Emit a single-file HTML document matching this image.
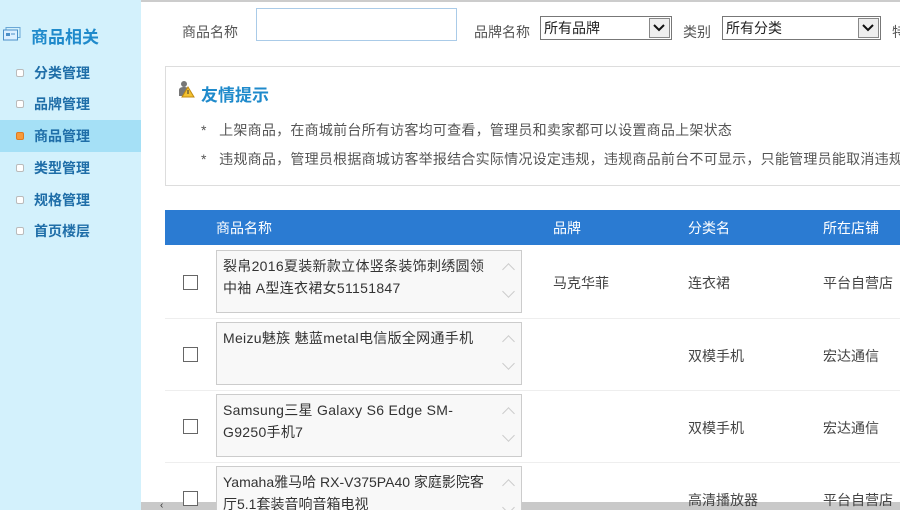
<!DOCTYPE html>
<html><head><meta charset="utf-8"><style>
*{margin:0;padding:0;box-sizing:border-box}
html,body{width:900px;height:510px;overflow:hidden}
body{position:relative;background:#fff;font-family:"Liberation Sans","Noto Sans CJK SC",sans-serif;font-size:14px;color:#555}
.abs{position:absolute;white-space:nowrap}
#side{position:absolute;left:0;top:0;width:141px;height:510px;background:#d3f1fc}
.it{position:absolute;left:0;width:141px;height:32px;line-height:32px;padding-left:34px;font-weight:bold;color:#1f6ea8;font-size:14px}
.it i{position:absolute;left:16px;top:12px;width:8px;height:8px;border-radius:2px;background:#fff;border:1px solid #bbb}
.it.on{background:#a5e0f6}
.it.on i{background:#f79a3a;border-color:#e07a20}
.sel{position:absolute;height:24px;border:1px solid #777;background:#fff;font-size:14px;color:#222;padding-left:3px;line-height:22px}
.sel b{position:absolute;right:1px;top:1px;width:21px;height:20px;border:1px solid #888;background:#eee}
.ta{position:absolute;left:216px;width:306px;height:63px;border:1px solid #ccc;background:#f8f8f8;padding:4px 36px 0 6px;font-size:14px;line-height:22px;color:#333;white-space:normal;z-index:2;letter-spacing:0.3px}
.ta:before,.ta:after{content:"";position:absolute;right:8px;width:8px;height:8px;border-left:1.5px solid #ccc;border-top:1.5px solid #ccc}
.ta:before{top:14px;transform:rotate(45deg)}
.ta:after{bottom:16px;transform:rotate(225deg)}
.cb{position:absolute;left:183px;width:15px;height:15px;border:1.5px solid #666;background:#fff;z-index:2}
.sep{position:absolute;left:165px;width:735px;height:1px;background:#eee}
.td{position:absolute;font-size:14px;color:#444;white-space:nowrap;z-index:2}
.tip{letter-spacing:0.25px}
</style></head><body>
<div class="abs" style="left:141px;top:0;width:759px;height:2px;background:#ccc"></div>
<div id="side">
 <svg class="abs" style="left:3px;top:27px" width="18" height="14"><rect x="3" y="0.5" width="14" height="10" fill="none" stroke="#6aa7d6"/><rect x="0.5" y="3" width="14" height="10" fill="#dcefff" stroke="#4b8fc8"/><rect x="3" y="6" width="4" height="3" fill="#4b8fc8"/><line x1="8" y1="7" x2="12" y2="7" stroke="#4b8fc8"/></svg>
 <div class="abs" style="left:31px;top:23px;font-size:17px;font-weight:bold;color:#1f8acb">商品相关</div>
 <div class="it" style="top:57px"><i></i>分类管理</div>
 <div class="it" style="top:88px"><i></i>品牌管理</div>
 <div class="it on" style="top:120px"><i></i>商品管理</div>
 <div class="it" style="top:152px"><i></i>类型管理</div>
 <div class="it" style="top:184px"><i></i>规格管理</div>
 <div class="it" style="top:215px"><i></i>首页楼层</div>
</div>
<div class="abs" style="left:182px;top:22px;color:#555">商品名称</div>
<div class="abs" style="left:256px;top:8px;width:201px;height:33px;border:1px solid #aacbe8"></div>
<div class="abs" style="left:474px;top:22px">品牌名称</div>
<div class="sel" style="left:540px;top:16px;width:132px">所有品牌<b><svg width="19" height="18"><path d="M4 6l5 5 5-5" fill="none" stroke="#111" stroke-width="2"/></svg></b></div>
<div class="abs" style="left:683px;top:22px">类别</div>
<div class="sel" style="left:722px;top:16px;width:159px">所有分类<b><svg width="19" height="18"><path d="M4 6l5 5 5-5" fill="none" stroke="#111" stroke-width="2"/></svg></b></div>
<div class="abs" style="left:892px;top:22px">特</div>
<div class="abs" style="left:165px;top:66px;width:740px;height:120px;border:1px solid #ddd"></div>
<svg class="abs" style="left:177px;top:80px" width="18" height="18"><circle cx="7" cy="4" r="3" fill="#777"/><path d="M2 16v-6c0-2 2-3 5-3s5 1 5 3v6z" fill="#777"/><path d="M11 7l6 10H5z" fill="#f3c130" stroke="#c08a10"/><rect x="10.5" y="10" width="1" height="4" fill="#333"/></svg>
<div class="abs" style="left:201px;top:81px;font-size:17px;font-weight:bold;color:#1f8acb">友情提示</div>
<div class="abs tip" style="left:201px;top:120px;color:#555">*&nbsp;&nbsp;&nbsp;上架商品，在商城前台所有访客均可查看，管理员和卖家都可以设置商品上架状态</div>
<div class="abs tip" style="left:201px;top:149px;color:#555">*&nbsp;&nbsp;&nbsp;违规商品，管理员根据商城访客举报结合实际情况设定违规，违规商品前台不可显示，只能管理员能取消违规</div>
<div class="abs" style="left:165px;top:210px;width:735px;height:35px;background:#2b7bd2"></div>
<div class="abs" style="left:216px;top:218px;color:#fff">商品名称</div>
<div class="abs" style="left:553px;top:218px;color:#fff">品牌</div>
<div class="abs" style="left:688px;top:218px;color:#fff">分类名</div>
<div class="abs" style="left:823px;top:218px;color:#fff">所在店铺</div>

<div class="cb" style="top:275px"></div>
<div class="ta" style="top:250px">裂帛2016夏装新款立体竖条装饰刺绣圆领中袖 A型连衣裙女51151847</div>
<div class="td" style="left:553px;top:273px">马克华菲</div>
<div class="td" style="left:688px;top:273px">连衣裙</div>
<div class="td" style="left:823px;top:273px">平台自营店</div>
<div class="sep" style="top:318px"></div>

<div class="cb" style="top:347px"></div>
<div class="ta" style="top:322px">Meizu魅族 魅蓝metal电信版全网通手机</div>
<div class="td" style="left:688px;top:346px">双模手机</div>
<div class="td" style="left:823px;top:346px">宏达通信</div>
<div class="sep" style="top:390px"></div>

<div class="cb" style="top:419px"></div>
<div class="ta" style="top:394px">Samsung三星 Galaxy S6 Edge SM-G9250手机7</div>
<div class="td" style="left:688px;top:418px">双模手机</div>
<div class="td" style="left:823px;top:418px">宏达通信</div>
<div class="sep" style="top:462px"></div>

<div class="abs" style="left:141px;top:502px;width:759px;height:8px;background:#c9c9c9;z-index:1"></div>
<div class="abs" style="left:160px;top:500px;font-size:10px;color:#333;z-index:1">&#x2039;</div>
<div class="cb" style="top:491px"></div>
<div class="ta" style="top:466px;letter-spacing:0;padding-right:28px">Yamaha雅马哈 RX-V375PA40 家庭影院客<br>厅5.1套装音响音箱电视</div>
<div class="td" style="left:688px;top:490px">高清播放器</div>
<div class="td" style="left:823px;top:490px">平台自营店</div>
</body></html>
